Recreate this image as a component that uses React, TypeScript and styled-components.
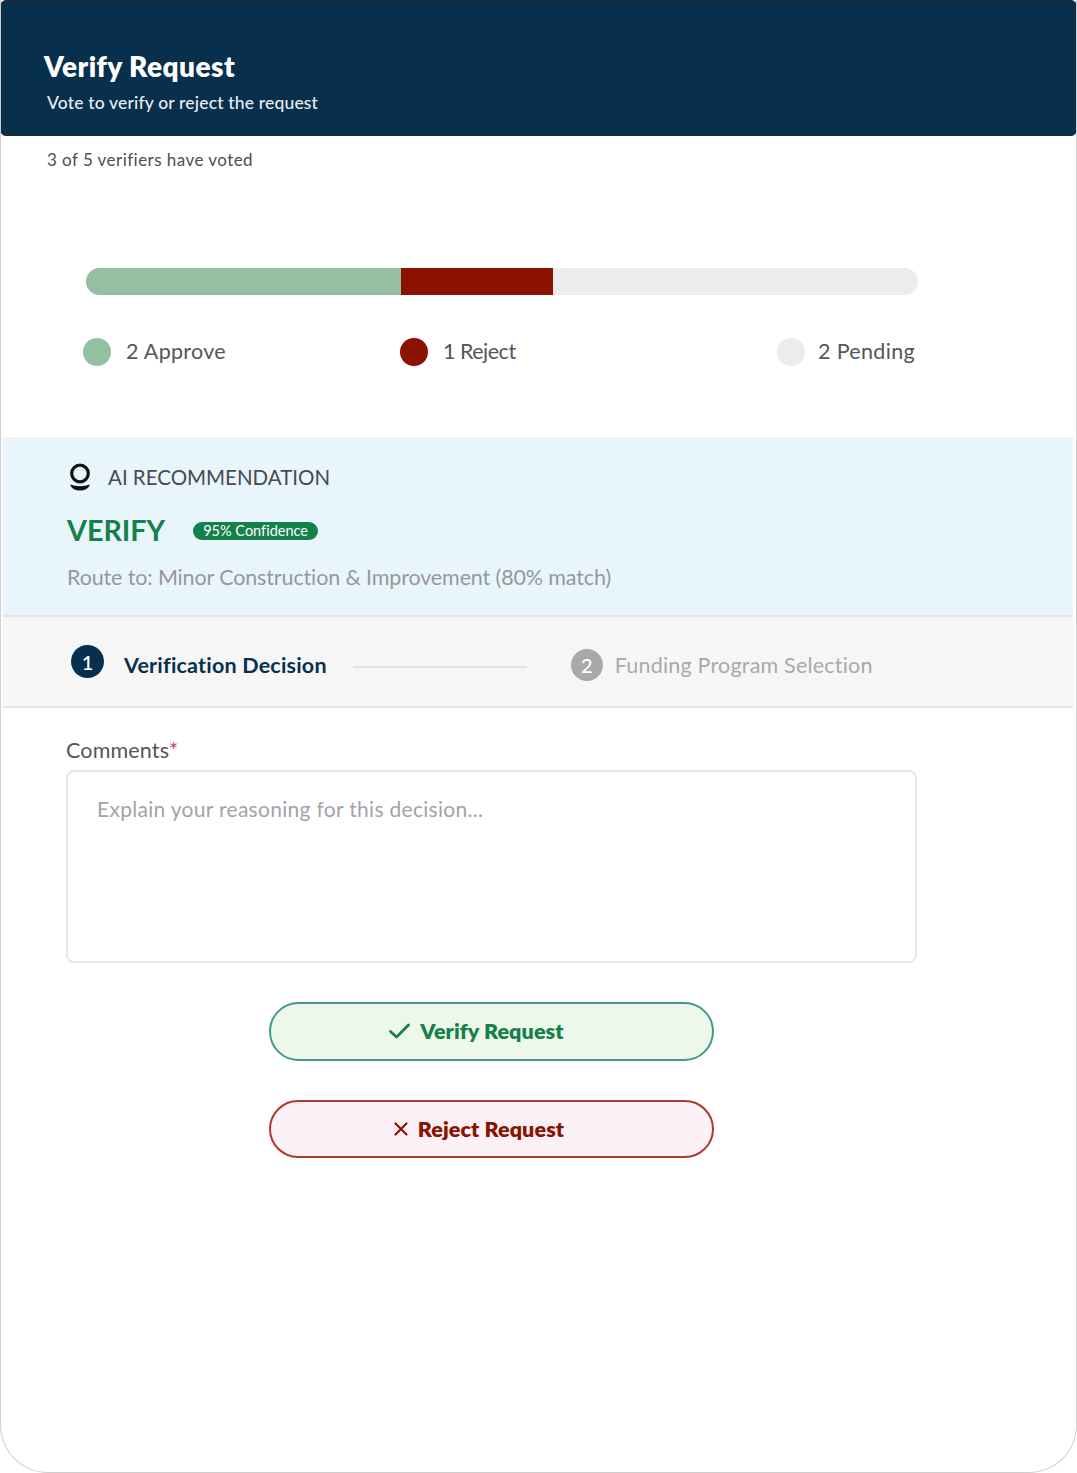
import React from 'react';
import styled, { createGlobalStyle } from 'styled-components';

const GlobalStyle = createGlobalStyle`
  html, body { margin: 0; padding: 0; background: #ffffff; }
  body { font-family: "Lato", "Liberation Sans", sans-serif; font-variant-ligatures: none; }
  * { box-sizing: border-box; }
`;

const Card = styled.div`
  width: 1077px;
  height: 1473px;
  background: #ffffff;
  border: 1px solid #cfcfcf;
  border-top: none;
  border-radius: 0 0 48px 48px;
  overflow: hidden;
`;
const Header = styled.header`
  height: 136px;
  margin: 0 -1px;
  padding: 49px 43px 0;
  background: #08304d;
  border: 1px solid #20262b;
  border-radius: 6px;
`;
const Title = styled.h1`
  margin: 0;
  font-size: 28px;
  line-height: 32px;
  font-weight: 800;
  letter-spacing: 0.45px;
  color: #ffffff;
`;
const Subtitle = styled.p`
  margin: 10px 0 0 3px;
  font-size: 17.5px;
  line-height: 22px;
  font-weight: 500;
  letter-spacing: 0.17px;
  color: #e6eef3;
`;
const VoteCount = styled.p`
  margin: 14px 0 0 46px;
  font-size: 17px;
  line-height: 20px;
  letter-spacing: 0.45px;
  color: #4d4d52;
`;
const VoteBar = styled.div`
  display: flex;
  width: 832px;
  height: 27px;
  margin: 98px 0 0 85px;
  border-radius: 14px;
  overflow: hidden;
  background: #ececec;
`;
const BarPart = styled.div<{ $color: string; $width: number }>`
  width: ${(p) => p.$width}px;
  background: ${(p) => p.$color};
`;
const Legend = styled.div`
  display: grid;
  grid-template-columns: 317px 1fr auto;
  width: 832px;
  margin: 41px 0 0 82px;
`;
const LegendItem = styled.div<{ $gap: number; $spacing: number }>`
  display: flex;
  align-items: center;
  gap: ${(p) => p.$gap}px;
  font-size: 21.5px;
  line-height: 26px;
  letter-spacing: ${(p) => p.$spacing}px;
  color: #55555a;
`;
const Dot = styled.span<{ $color: string }>`
  width: 28px;
  height: 28px;
  margin-top: 2px;
  border-radius: 50%;
  background: ${(p) => p.$color};
`;
const AiPanel = styled.section`
  height: 180px;
  margin: 71px 3px 0 2px;
  padding: 26px 0 0 64px;
  background: #e8f6fb;
  border-bottom: 2px solid #dfe5e8;
`;
const AiHeading = styled.div`
  display: flex;
  align-items: center;
  gap: 15px;
  font-size: 20.5px;
  line-height: 28px;
  color: #4a4a50;
`;
const VerdictRow = styled.div`
  display: flex;
  align-items: center;
  gap: 28px;
  margin-top: 22px;
`;
const Verdict = styled.span`
  font-size: 28.7px;
  line-height: 34px;
  font-weight: 700;
  color: #14804a;
`;
const Confidence = styled.span`
  margin-top: 2px;
  padding: 0 10px;
  height: 18px;
  border-radius: 9px;
  background: #14804a;
  color: #ffffff;
  font-size: 14.5px;
  line-height: 18px;
`;
const RouteText = styled.p`
  margin: 17px 0 0;
  font-size: 21.5px;
  line-height: 26px;
  letter-spacing: -0.13px;
  color: #97979b;
`;
const Stepper = styled.div`
  display: flex;
  align-items: center;
  height: 91px;
  margin: 0 3px 0 2px;
  padding: 6px 0 0 68px;
  background: #f6f6f6;
  border-bottom: 2px solid #e6e6e6;
`;
const StepBadge = styled.span<{ $active?: boolean }>`
  display: flex;
  align-items: center;
  justify-content: center;
  width: ${(p) => (p.$active ? 33 : 32)}px;
  height: ${(p) => (p.$active ? 33 : 32)}px;
  margin-bottom: ${(p) => (p.$active ? 6 : 0)}px;
  border-radius: 50%;
  font-size: 20px;
  font-weight: 500;
  color: #ffffff;
  background: ${(p) => (p.$active ? '#06304f' : '#a9a9a9')};
`;
const StepLabel = styled.span<{ $active?: boolean }>`
  margin-left: ${(p) => (p.$active ? 20 : 12)}px;
  font-size: 21.5px;
  font-weight: ${(p) => (p.$active ? 700 : 400)};
  letter-spacing: 0.2px;
  color: ${(p) => (p.$active ? '#06304f' : '#a9a9a9')};
`;
const StepLine = styled.span`
  width: 174px;
  height: 2px;
  margin: 4px 44px 0 26px;
  background: #e2e2e2;
`;
const Form = styled.form`
  display: flex;
  flex-direction: column;
  width: 851px;
  margin: 29px 0 0 65px;
`;
const FieldLabel = styled.label`
  font-size: 21.5px;
  line-height: 26px;
  letter-spacing: 0.15px;
  color: #55555a;
`;
const Required = styled.span`
  color: #d43a5c;
`;
const CommentBox = styled.textarea`
  width: 851px;
  height: 193px;
  margin-top: 7px;
  padding: 24px 29px;
  border: 2px solid #e6e6e6;
  border-radius: 8px;
  background: #ffffff;
  resize: none;
  outline: none;
  font-family: inherit;
  font-size: 21px;
  line-height: 26px;
  letter-spacing: 0.3px;
  color: #55555a;

  &::placeholder {
    color: #a3a3a7;
    opacity: 1;
  }
`;
const Actions = styled.div`
  display: flex;
  flex-direction: column;
  gap: 39px;
  margin: 39px 0 0 203px;
`;
const ActionButton = styled.button<{ $tone: 'verify' | 'reject' }>`
  display: flex;
  align-items: center;
  justify-content: center;
  gap: 9px;
  width: 445px;
  height: ${(p) => (p.$tone === 'verify' ? 59 : 58)}px;
  padding: 0 ${(p) => (p.$tone === 'verify' ? 31 : 26)}px ${(p) => (p.$tone === 'verify' ? 2 : 0)}px 0;
  border-radius: 30px;
  border: 2px solid ${(p) => (p.$tone === 'verify' ? '#429a8c' : '#ad3a30')};
  background: ${(p) => (p.$tone === 'verify' ? '#eef8ea' : '#fbf1f7')};
  color: ${(p) => (p.$tone === 'verify' ? '#14804a' : '#8b1200')};
  font-family: inherit;
  font-size: 21.5px;
  font-weight: 800;
  letter-spacing: 0.1px;
  cursor: pointer;
`;

const AiIcon = () => (
  <svg width="26" height="28" viewBox="0 0 26 28" fill="none">
    <circle cx="13" cy="10.5" r="8.3" stroke="#111" strokeWidth="3.2" />
    <path d="M3 21.5 Q13 25 23 21.5 Q21 27.5 13 27.5 Q5 27.5 3 21.5Z" fill="#111" />
  </svg>
);

const CheckIcon = () => (
  <svg width="23" height="18" viewBox="0 0 23 18" fill="none" stroke="#1b7a58" strokeWidth="2.8" strokeLinecap="round" strokeLinejoin="round">
    <path d="M2.5 9.5 L8.5 15 L20.5 3" />
  </svg>
);

const CrossIcon = () => (
  <svg width="16" height="16" viewBox="0 0 16 16" fill="none" stroke="#8b1200" strokeWidth="2.2" strokeLinecap="round">
    <path d="M2.5 2.5 L13.5 13.5 M13.5 2.5 L2.5 13.5" />
  </svg>
);

export default function App() {
  return (
    <>
      <GlobalStyle />
      <Card>
        <Header>
          <Title>Verify Request</Title>
          <Subtitle>Vote to verify or reject the request</Subtitle>
        </Header>
        <VoteCount>3 of 5 verifiers have voted</VoteCount>

        <VoteBar>
          <BarPart $color="#95bfa2" $width={315} />
          <BarPart $color="#8b1200" $width={152} />
        </VoteBar>
        <Legend>
          <LegendItem $gap={15} $spacing={0.3}><Dot $color="#95bfa2" />2 Approve</LegendItem>
          <LegendItem $gap={15} $spacing={-0.5}><Dot $color="#8b1200" />1 Reject</LegendItem>
          <LegendItem $gap={13} $spacing={0.32}><Dot $color="#ececec" />2 Pending</LegendItem>
        </Legend>

        <AiPanel>
          <AiHeading><AiIcon />AI RECOMMENDATION</AiHeading>
          <VerdictRow>
            <Verdict>VERIFY</Verdict>
            <Confidence>95% Confidence</Confidence>
          </VerdictRow>
          <RouteText>Route to: Minor Construction &amp; Improvement (80% match)</RouteText>
        </AiPanel>

        <Stepper>
          <StepBadge $active>1</StepBadge>
          <StepLabel $active>Verification Decision</StepLabel>
          <StepLine />
          <StepBadge>2</StepBadge>
          <StepLabel>Funding Program Selection</StepLabel>
        </Stepper>

        <Form>
          <FieldLabel htmlFor="comments">Comments<Required>*</Required></FieldLabel>
          <CommentBox id="comments" placeholder="Explain your reasoning for this decision..." />
          <Actions>
            <ActionButton type="button" $tone="verify"><CheckIcon />Verify Request</ActionButton>
            <ActionButton type="button" $tone="reject"><CrossIcon />Reject Request</ActionButton>
          </Actions>
        </Form>
      </Card>
    </>
  );
}
